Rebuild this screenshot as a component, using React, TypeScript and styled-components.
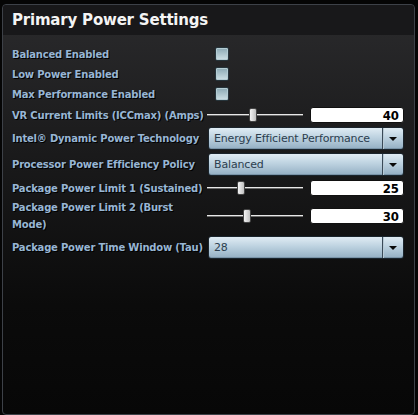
import React from 'react';
import styled, { createGlobalStyle } from 'styled-components';

const GlobalStyle = createGlobalStyle`
  html, body {
    margin: 0;
    padding: 0;
    background: #050505;
  }
  body {
    font-family: 'DejaVu Sans', sans-serif;
  }
`;

const Page = styled.div`
  width: 418px;
  height: 415px;
  padding: 4px 3px 2px 2px;
  box-sizing: border-box;
`;

const Panel = styled.div`
  height: 100%;
  border: 1px solid #3d4148;
  border-radius: 4px;
  overflow: hidden;
  display: flex;
  flex-direction: column;
  background: linear-gradient(to bottom, #2b2b2d 0px, #1a1a1b 150px, #0b0b0b 300px, #070707 100%);
`;

const Header = styled.div`
  height: 30px;
  background: #18181a;
  display: flex;
  align-items: center;
  padding-left: 9px;
  flex-shrink: 0;
`;

const Title = styled.h1`
  margin: 0;
  font-family: 'DejaVu Sans', sans-serif;
  font-weight: bold;
  font-size: 15px;
  color: #f4f4f4;
  letter-spacing: -0.2px;
`;

const Body = styled.div`
  padding: 9px 10px 0 9px;
  display: flex;
  flex-direction: column;
`;

const Row = styled.div<{ $h: number }>`
  height: ${(p) => p.$h}px;
  display: grid;
  grid-template-columns: 195px 1fr;
  align-items: center;
`;

const Label = styled.div`
  font-family: 'DejaVu Sans', sans-serif;
  font-weight: bold;
  font-size: 10px;
  letter-spacing: -0.2px;
  line-height: 17px;
  color: #98b6d4;
  text-shadow: 1px 1px 0 #000;
`;

const Checkbox = styled.div`
  width: 12px;
  height: 12px;
  margin-left: 8px;
  border: 1px solid #26343b;
  border-radius: 2px;
  background: linear-gradient(to bottom, #8aa8b3, #cfe1e6);
  box-shadow: inset 0 0 0 1px #b4ccd3;
`;

const SliderGroup = styled.div`
  display: flex;
  align-items: center;
  gap: 7px;
`;

const Track = styled.div`
  position: relative;
  width: 96px;
  height: 14px;
  &::before {
    content: '';
    position: absolute;
    left: 0;
    right: 0;
    top: 6px;
    height: 1px;
    background: #e8e8e8;
    border-bottom: 1px solid #6a6a6a;
  }
`;

const Thumb = styled.div`
  position: absolute;
  top: 0;
  width: 6px;
  height: 12px;
  margin-left: -3px;
  border: 1px solid #444;
  border-radius: 2px;
  background: linear-gradient(to right, #f4f4f4, #c0c0c0);
`;

const NumberBox = styled.div`
  flex: 1;
  height: 14px;
  background: #fff;
  border: 1px solid #111;
  border-radius: 3px;
  text-align: right;
  padding-right: 4px;
  font-family: 'DejaVu Sans Condensed', 'DejaVu Sans', sans-serif;
  font-weight: bold;
  font-size: 13px;
  line-height: 15px;
  color: #000;
`;

const Select = styled.div`
  height: 21px;
  margin-left: 1px;
  border: 1px solid #1a242c;
  border-radius: 3px;
  display: flex;
  background: linear-gradient(to bottom, #e0ecf4 0%, #bdd2e0 45%, #94afc3 100%);
  box-shadow: inset 0 -1px 0 #7a94a8;
`;

const SelectText = styled.div`
  flex: 1;
  padding-left: 5px;
  font-family: 'DejaVu Sans', sans-serif;
  font-size: 11px;
  letter-spacing: -0.15px;
  line-height: 21px;
  color: #2c3e4e;
`;

const ArrowCell = styled.div`
  width: 20px;
  border-left: 1px solid #3a4a58;
  box-shadow: inset 1px 0 0 #b8cad6;
  display: flex;
  align-items: center;
  justify-content: center;
  &::after {
    content: '';
    border-left: 4px solid transparent;
    border-right: 4px solid transparent;
    border-top: 4px solid #0a0a0a;
  }
`;

type Item =
  | { kind: 'check'; label: string; h: number }
  | { kind: 'slider'; label: string; h: number; value: number; pos: number }
  | { kind: 'select'; label: string; h: number; value: string };

const items: Item[] = [
  { kind: 'check', label: 'Balanced Enabled', h: 20 },
  { kind: 'check', label: 'Low Power Enabled', h: 20 },
  { kind: 'check', label: 'Max Performance Enabled', h: 20 },
  { kind: 'slider', label: 'VR Current Limits (ICCmax) (Amps)', h: 22, value: 40, pos: 47 },
  { kind: 'select', label: 'Intel® Dynamic Power Technology', h: 25, value: 'Energy Efficient Performance' },
  { kind: 'select', label: 'Processor Power Efficiency Policy', h: 27, value: 'Balanced' },
  { kind: 'slider', label: 'Package Power Limit 1 (Sustained)', h: 20, value: 25, pos: 34.5 },
  { kind: 'slider', label: 'Package Power Limit 2 (Burst Mode)', h: 35, value: 30, pos: 41 },
  { kind: 'select', label: 'Package Power Time Window (Tau)', h: 29, value: '28' },
];

const Control = ({ item }: { item: Item }) => {
  if (item.kind === 'check') return <Checkbox />;
  if (item.kind === 'slider')
    return (
      <SliderGroup>
        <Track>
          <Thumb style={{ left: `${item.pos}%` }} />
        </Track>
        <NumberBox>{item.value}</NumberBox>
      </SliderGroup>
    );
  return (
    <Select>
      <SelectText>{item.value}</SelectText>
      <ArrowCell />
    </Select>
  );
};

export default function App() {
  return (
    <>
      <GlobalStyle />
      <Page>
        <Panel>
          <Header>
            <Title>Primary Power Settings</Title>
          </Header>
          <Body>
            {items.map((item) => (
              <Row key={item.label} $h={item.h}>
                <Label>{item.label}</Label>
                <Control item={item} />
              </Row>
            ))}
          </Body>
        </Panel>
      </Page>
    </>
  );
}
